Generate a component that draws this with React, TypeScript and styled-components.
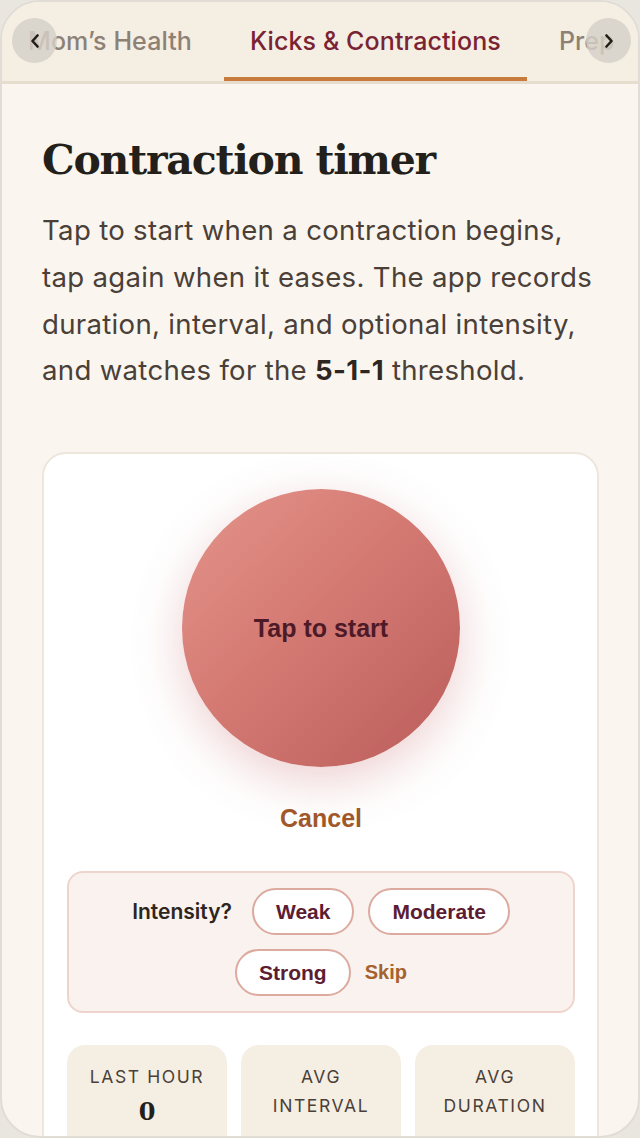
import React, { useState } from 'react';
import styled, { createGlobalStyle } from 'styled-components';

const GlobalStyle = createGlobalStyle`
	html, body {
		margin: 0;
		padding: 0;
		background: #e9e6e0;
	}
	body {
		font-family: 'Inter', 'Noto Sans', sans-serif;
	}
	* {
		box-sizing: border-box;
	}
`;

const tabs = ["Mom’s Health", 'Kicks & Contractions', 'Prep & Birth'];
const intensities = ['Weak', 'Moderate', 'Strong'];
const stats = [
	{ label: 'Last hour', value: '0' },
	{ label: 'Avg interval', value: '—' },
	{ label: 'Avg duration', value: '—' }
];

const Chevron: React.FC<{ dir: 'left' | 'right' }> = ({ dir }) => (
	<svg width="10" height="14" viewBox="0 0 10 14" fill="none">
		<polyline
			points={dir === 'left' ? '7.5,1.5 2.5,7 7.5,12.5' : '2.5,1.5 7.5,7 2.5,12.5'}
			stroke="#231d18"
			strokeWidth="2.6"
			strokeLinecap="round"
			strokeLinejoin="round"
		/>
	</svg>
);

const App: React.FC = () => {
	const [active] = useState(1);

	return (
		<>
			<GlobalStyle />
			<Frame>
				<TabBar>
					<TabList>
						{tabs.map((t, i) => (
							<Tab key={t} $active={i === active}>
								{t}
							</Tab>
						))}
					</TabList>
					<ScrollButton $side="left" aria-label="Previous">
						<Chevron dir="left" />
					</ScrollButton>
					<ScrollButton $side="right" aria-label="Next">
						<Chevron dir="right" />
					</ScrollButton>
				</TabBar>

				<Content>
					<Title>Contraction timer</Title>
					<Lead>
						Tap to start when a contraction begins, tap again when it eases. The
						app records duration, interval, and optional intensity, and watches
						for the <strong>5-1-1</strong> threshold.
					</Lead>

					<Card>
						<TimerButton>Tap to start</TimerButton>
						<CancelButton>Cancel</CancelButton>

						<IntensityBox>
							<IntensityLabel>Intensity?</IntensityLabel>
							{intensities.map((level) => (
								<Pill key={level}>{level}</Pill>
							))}
							<SkipButton>Skip</SkipButton>
						</IntensityBox>

						<Stats>
							{stats.map((s) => (
								<Stat key={s.label}>
									<StatLabel>{s.label}</StatLabel>
									<StatValue>{s.value}</StatValue>
								</Stat>
							))}
						</Stats>
					</Card>
				</Content>
			</Frame>
		</>
	);
};

const Frame = styled.div`
	height: 100vh;
	border: 2px solid #e1ddd6;
	border-radius: 40px;
	overflow: hidden;
	background: #faf6ef;
	display: flex;
	flex-direction: column;
`;

const TabBar = styled.nav`
	position: relative;
	flex-shrink: 0;
	height: 82px;
	background: #f4eee3;
	border-bottom: 3px solid #e6ddcf;
`;

const TabList = styled.div`
	display: flex;
	gap: 6px;
	height: 100%;
	margin-right: 16px;
	overflow: hidden;
	white-space: nowrap;
`;

const Tab = styled.div<{ $active?: boolean }>`
	position: relative;
	flex-shrink: 0;
	display: flex;
	align-items: center;
	padding: 0 26px 2px;
	font-size: 25px;
	font-weight: 500;
	letter-spacing: 0.1px;
	color: ${({ $active }) => ($active ? '#7a2332' : '#8d8176')};

	${({ $active }) =>
		$active &&
		`
		&::before {
			content: '';
			position: absolute;
			left: 0;
			right: 0;
			bottom: 0;
			height: 4px;
			background: #c97b3b;
		}
		&::after {
			content: '';
			position: absolute;
			left: 50px;
			right: 1px;
			bottom: -3px;
			height: 3px;
			background: #c97b3b;
		}
	`}
`;

const ScrollButton = styled.button<{ $side: 'left' | 'right' }>`
	position: absolute;
	top: 16px;
	${({ $side }) => ($side === 'left' ? 'left: 10px;' : 'right: 7px;')}
	width: 45px;
	height: 45px;
	border: none;
	border-radius: 50%;
	background: rgba(214, 209, 200, 0.82);
	display: flex;
	align-items: center;
	justify-content: center;
	padding: 0;
	cursor: pointer;
`;

const Content = styled.main`
	flex: 1;
	padding: 52px 39px 0 40px;
	overflow: hidden;
`;

const Title = styled.h1`
	margin: 0;
	font-family: 'DejaVu Serif', 'Liberation Serif', serif;
	font-size: 41px;
	font-weight: 700;
	line-height: 1.2;
	color: #231f1b;
	letter-spacing: -1.2px;
`;

const Lead = styled.p`
	margin: 22px 0 0;
	font-size: 27.6px;
	line-height: 46.7px;
	letter-spacing: 0.3px;
	color: #4a4038;

	strong {
		font-weight: 700;
		color: #2e2620;
	}
`;

const Card = styled.section`
	margin-top: 58px;
	background: #ffffff;
	border: 2px solid #ece6dd;
	border-radius: 24px;
	padding: 35px 22px 40px 23px;
	display: flex;
	flex-direction: column;
	align-items: center;
`;

const TimerButton = styled.button`
	width: 278px;
	height: 278px;
	border: none;
	border-radius: 50%;
	background: linear-gradient(135deg, #e4948b 0%, #d47a73 45%, #bb5d5b 100%);
	box-shadow: 0 14px 50px rgba(196, 96, 100, 0.3);
	font-family: 'Liberation Sans', Arial, sans-serif;
	font-size: 25px;
	font-weight: 700;
	color: #4e1a28;
	cursor: pointer;
`;

const CancelButton = styled.button`
	margin-top: 37px;
	border: none;
	background: none;
	padding: 0;
	font-family: 'Liberation Sans', Arial, sans-serif;
	font-size: 25px;
	font-weight: 700;
	color: #a0582b;
	cursor: pointer;
`;

const IntensityBox = styled.div`
	margin-top: 38px;
	width: 100%;
	background: #f9f2ee;
	border: 2px solid #eed5cc;
	border-radius: 16px;
	padding: 15px 20px 15px;
	display: flex;
	flex-wrap: wrap;
	justify-content: center;
	align-items: center;
	gap: 14px;
`;

const IntensityLabel = styled.span`
	margin-right: 6px;
	font-size: 21px;
	font-weight: 600;
	color: #2c2520;
`;

const Pill = styled.button`
	height: 47px;
	padding: 0 22px;
	background: #ffffff;
	border: 2px solid #dcaa9f;
	border-radius: 24px;
	font-family: 'Liberation Sans', Arial, sans-serif;
	font-size: 21px;
	font-weight: 700;
	color: #5c1d33;
	cursor: pointer;
`;

const SkipButton = styled.button`
	border: none;
	background: none;
	padding: 0;
	font-family: 'Liberation Sans', Arial, sans-serif;
	font-size: 20px;
	font-weight: 700;
	color: #a6622c;
	cursor: pointer;
`;

const Stats = styled.div`
	margin-top: 32px;
	width: 100%;
	display: grid;
	grid-template-columns: repeat(3, 1fr);
	gap: 14px;
`;

const Stat = styled.div`
	background: #f5eee3;
	border-radius: 18px;
	padding: 17px 12px 18px;
	text-align: center;
`;

const StatLabel = styled.div`
	font-size: 17.5px;
	line-height: 29px;
	letter-spacing: 1.6px;
	text-transform: uppercase;
	color: #4a4038;
`;

const StatValue = styled.div`
	margin-top: 6px;
	font-family: 'DejaVu Serif', 'Liberation Serif', serif;
	font-size: 24px;
	font-weight: 700;
	color: #231f1b;
`;

export default App;
